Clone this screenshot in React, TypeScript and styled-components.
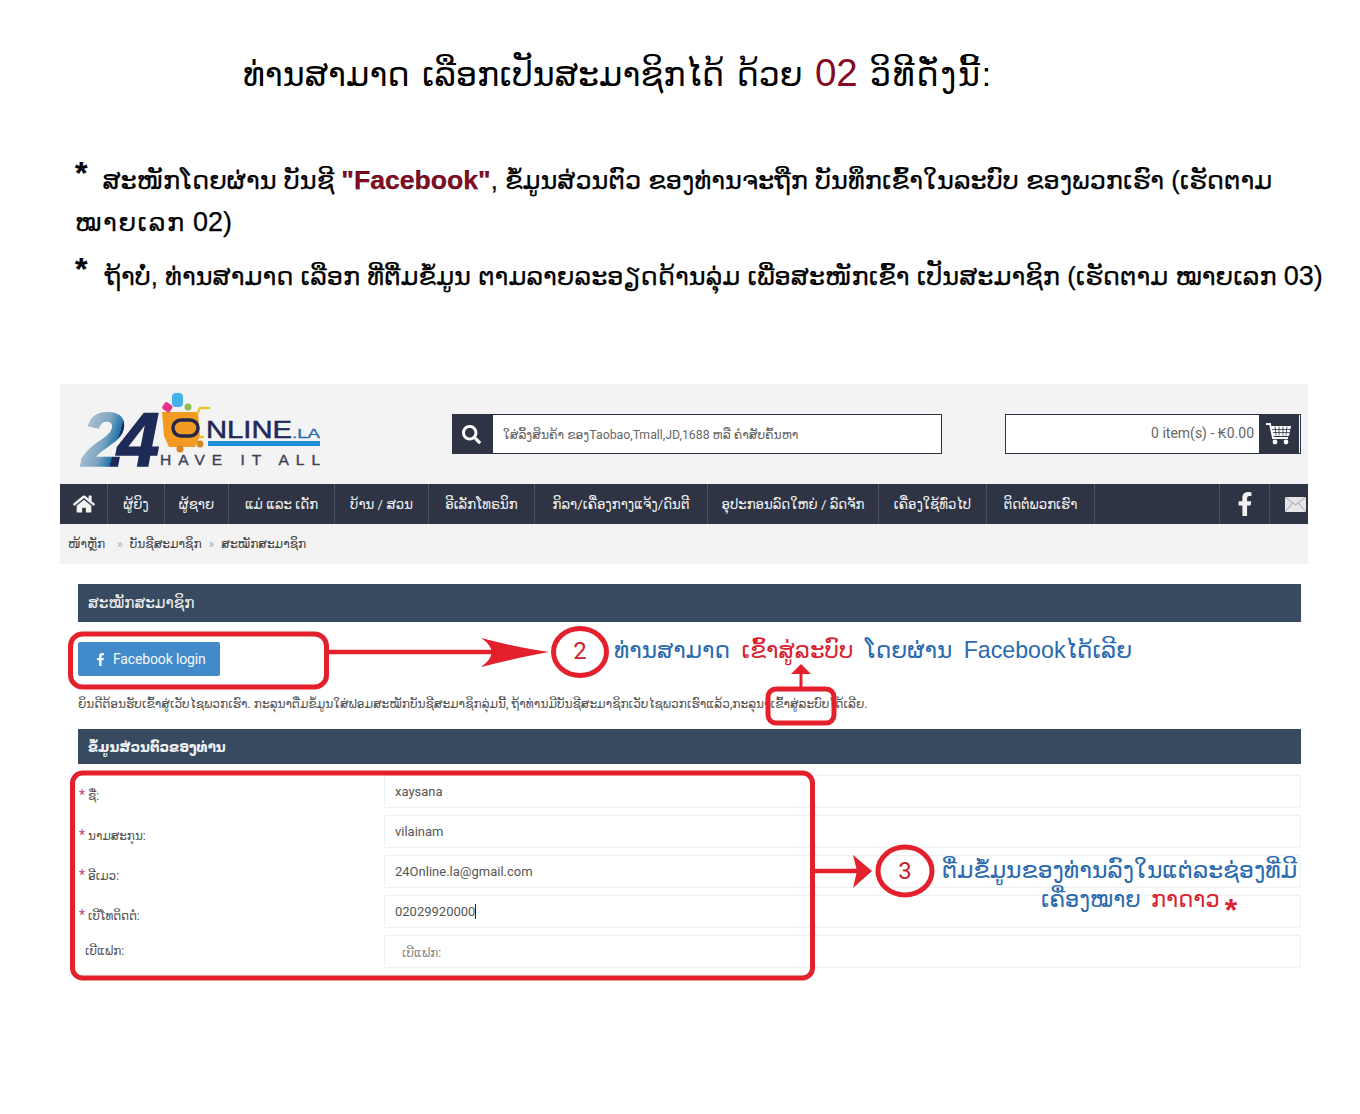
import React from "react";
import styled, { createGlobalStyle } from "styled-components";
import { FaHome, FaSearch, FaFacebookF } from "react-icons/fa";

const Global = createGlobalStyle`
  html, body { margin: 0; padding: 0; background: #fff; }
  * { box-sizing: border-box; }
`;

const LAO = `"Liberation Sans", "DejaVu Sans", sans-serif`;
const SITE = `Roboto, "DejaVu Sans", sans-serif`;

const Page = styled.div`
  position: relative;
  width: 1360px;
  height: 1114px;
  background: #fff;
  overflow: hidden;
  font-family: ${LAO};
  color: #000;
`;

const Intro = styled.section`
  height: 384px;
  padding: 51px 0 0 75px;
`;

const Title = styled.h1`
  margin: 0 0 62px 168px;
  font-size: 33.3px;
  word-spacing: 3px;
  line-height: 44px;
  font-weight: 400;
  white-space: nowrap;
`;

const Accent = styled.span<{ $bold?: boolean; $big?: number }>`
  color: #860a24;
  font-weight: ${(p) => (p.$bold ? 700 : 400)};
  font-size: ${(p) => (p.$big ? `${p.$big}px` : "inherit")};
`;

const Para = styled.p<{ $gap: number; $size: number }>`
  margin: 0 0 ${(p) => p.$gap}px;
  font-size: ${(p) => p.$size}px;
  line-height: 42px;
  white-space: nowrap;
  -webkit-text-stroke: 0.25px #000;
`;

const Latin = styled.span`
  font-size: 27px;
`;

const Spaced = styled.span<{ $by: number }>`
  letter-spacing: ${(p) => p.$by}px;
`;

const Star = styled.span<{ $right: number }>`
  display: inline-block;
  margin-right: ${(p) => p.$right}px;
  font-size: 32px;
  font-weight: 700;
  line-height: 20px;
  vertical-align: 5px;
`;

const Shop = styled.div`
  width: 1248px;
  margin-left: 60px;
  font-family: ${SITE};
`;

const Header = styled.header`
  display: flex;
  align-items: center;
  height: 100px;
  padding: 0 7px 0 10px;
  background: #f3f3f4;
`;

const LogoArt = styled.svg`
  display: block;
  flex: none;
  width: 260px;
  height: 100px;
  margin-right: 122px;
`;

const Search = styled.div`
  display: flex;
  flex: none;
  width: 490px;
  height: 40px;
  margin-right: 63px;
  border: 1px solid #2e3444;
  background: #fff;
`;

const SearchButton = styled.div`
  display: flex;
  flex: none;
  align-items: center;
  justify-content: center;
  width: 40px;
  padding-right: 3px;
  background: #2e3444;
  color: #fff;
  font-size: 19px;
`;

const SearchHint = styled.div`
  padding-left: 10px;
  font-size: 12.3px;
  line-height: 40px;
  color: #666;
  white-space: nowrap;
`;

const Cart = styled.div`
  display: flex;
  flex: none;
  justify-content: flex-end;
  width: 296px;
  height: 40px;
  padding-right: 1px;
  border: 1px solid #2e3444;
  background: #fff;
`;

const CartTotal = styled.div`
  padding-right: 5px;
  font-size: 14px;
  line-height: 36px;
  color: #666;
`;

const CartButton = styled.div`
  display: flex;
  flex: none;
  align-items: center;
  justify-content: center;
  width: 40px;
  background: #2e3444;
`;

const Nav = styled.nav`
  display: flex;
  height: 40px;
  background: #2e3444;
`;

const NavItem = styled.div<{ $w: number }>`
  display: flex;
  flex: none;
  align-items: center;
  justify-content: center;
  width: ${(p) => p.$w}px;
  border-right: 1px dotted #666c7a;
  color: #eef0f2;
  font-size: 13.3px;
  white-space: nowrap;
`;

const NavFill = styled.div`
  flex: 1;
  border-right: 1px dotted #666c7a;
`;

const NavIcon = styled.div<{ $w: number; $last?: boolean }>`
  display: flex;
  flex: none;
  align-items: center;
  justify-content: ${(p) => (p.$last ? "flex-end" : "center")};
  width: ${(p) => p.$w}px;
  padding-right: ${(p) => (p.$last ? "2px" : "0")};
  border-right: ${(p) => (p.$last ? "none" : "1px dotted #666c7a")};
  color: #f2f2f2;
  font-size: 24px;
`;

const HomeGlyph = styled(FaHome)`
  font-size: 22px;
`;

const Crumbs = styled.div`
  display: flex;
  align-items: center;
  gap: 7px;
  height: 40px;
  padding-left: 8px;
  background: #f3f3f4;
  color: #444;
  font-size: 12.2px;
  white-space: nowrap;
`;

const CrumbHome = styled.span`
  width: 42px;
`;

const CrumbSep = styled.span`
  color: #aaa;
`;

const Form = styled.div`
  padding: 20px 7px 0 18px;
`;

const SectionBar = styled.h2<{ $h: number; $bold?: boolean }>`
  display: flex;
  align-items: center;
  height: ${(p) => p.$h}px;
  margin: 0;
  padding-left: 10px;
  background: #374a5f;
  color: #eef1f4;
  font-size: ${(p) => (p.$bold ? 13.5 : 15.3)}px;
  font-weight: ${(p) => (p.$bold ? 700 : 400)};
`;

const FbButton = styled.div`
  display: inline-flex;
  align-items: center;
  gap: 6px;
  width: 142px;
  height: 34px;
  margin-top: 20px;
  padding-left: 16px;
  border-radius: 2px;
  background: #428bca;
  color: #f4f8fb;
  font-size: 14px;
  letter-spacing: -0.15px;
`;

const Note = styled.p`
  margin: 20px 0 16px;
  font-size: 12.17px;
  line-height: 17px;
  color: #555;
  white-space: nowrap;
`;

const Rows = styled.div`
  display: flex;
  flex-direction: column;
  gap: 7px;
  margin-top: 11px;
`;

const Row = styled.div`
  display: flex;
  height: 33px;
`;

const Label = styled.div<{ $plain?: boolean }>`
  flex: none;
  width: 306px;
  padding: ${(p) => (p.$plain ? "8px 0 0 7px" : "12px 0 0 1px")};
  font-size: 12px;
  line-height: 16px;
  color: #555;
  white-space: nowrap;
`;

const Req = styled.span`
  margin-right: 3px;
  color: #c2477a;
  font-size: 14px;
`;

const Field = styled.div<{ $hint?: boolean }>`
  flex: 1;
  padding: ${(p) => (p.$hint ? "9px 0 0 17px" : "0 0 0 10px")};
  border: 1px solid #eef1f3;
  font-size: ${(p) => (p.$hint ? 12 : 13)}px;
  line-height: ${(p) => (p.$hint ? "16px" : "32px")};
  color: ${(p) => (p.$hint ? "#888" : "#555")};
  border-radius: 2px;
`;

const Caret = styled.span`
  display: inline-block;
  width: 1px;
  height: 15px;
  background: #222;
  vertical-align: -3px;
`;

const Markup = styled.svg`
  position: absolute;
  top: 0;
  left: 0;
  width: 1360px;
  height: 1114px;
  pointer-events: none;
`;

const Callout = styled.div<{ $x: number; $y: number; $size: number; $spread?: number }>`
  position: absolute;
  left: ${(p) => p.$x}px;
  top: ${(p) => p.$y}px;
  font-family: ${LAO};
  font-size: ${(p) => p.$size}px;
  word-spacing: ${(p) => p.$spread ?? 0}px;
  line-height: 30px;
  color: #2a6aae;
  white-space: nowrap;
`;

const CalloutRed = styled.span`
  color: #d8232f;
`;

const CalloutStar = styled.span`
  margin-left: 5px;
  color: #d8232f;
  font-size: 32px;
  font-weight: 700;
  line-height: 20px;
  vertical-align: -14px;
`;

const CircleNumber = styled.div<{ $x: number; $y: number }>`
  position: absolute;
  left: ${(p) => p.$x - 20}px;
  top: ${(p) => p.$y - 15}px;
  width: 40px;
  font-family: ${SITE};
  font-size: 24px;
  line-height: 30px;
  color: #c8222c;
  text-align: center;
`;

const navItems: [string, number][] = [
  ["ຜູ້ຍິງ", 57],
  ["ຜູ້ຊາຍ", 64],
  ["ແມ່ ແລະ ເດັກ", 106],
  ["ບ້ານ / ສວນ", 94],
  ["ອີເລັກໂທຣນິກ", 106],
  ["ກິລາ/ເຄື່ອງກາງແຈ້ງ/ດົນຕີ", 173],
  ["ອຸປະກອນລົດໃຫຍ່ / ລົດຈັກ", 171],
  ["ເຄື່ອງໃຊ້ທົ່ວໄປ", 108],
  ["ຕິດຕໍ່ພວກເຮົາ", 108],
];

const rows: { label: string; value?: string; caret?: boolean; hint?: string }[] = [
  { label: "ຊື່:", value: "xaysana" },
  { label: "ນາມສະກຸນ:", value: "vilainam" },
  { label: "ອີເມວ:", value: "24Online.la@gmail.com" },
  { label: "ເບີໂທຕິດຕໍ່:", value: "02029920000", caret: true },
  { label: "ເບີແຟກ:", hint: "ເບີແຟກ:" },
];

const Logo = () => (
  <LogoArt viewBox="70 384 260 100">
    <defs>
      <linearGradient id="two" gradientUnits="userSpaceOnUse" x1="85" y1="415" x2="165" y2="440">
        <stop offset="0" stopColor="#b4c8d8" />
        <stop offset="0.3" stopColor="#7fa5c0" />
        <stop offset="0.46" stopColor="#1a74a6" />
        <stop offset="0.46" stopColor="#1e2a57" />
        <stop offset="1" stopColor="#1e2a57" />
      </linearGradient>
    </defs>
    <text x="82" y="466" fontFamily="Liberation Sans" fontWeight="700" fontStyle="italic" fontSize="76" letterSpacing="-7" fill="url(#two)" stroke="url(#two)" strokeWidth="1.5">24</text>
    <path d="M162 412h36l2 24-5 11h-26l-5-11z" fill="#f39a23" />
    <path d="M197 414l3-6h10M199 437h5" fill="none" stroke="#e9c52c" strokeWidth="2.5" />
    <circle cx="180" cy="449" r="3.5" fill="#d9861f" />
    <circle cx="200" cy="444" r="3.5" fill="#d9861f" />
    <rect x="163" y="403" width="9" height="8" rx="2" transform="rotate(35 167 407)" fill="#e8318c" />
    <rect x="172" y="393" width="11" height="14" rx="4" fill="#45b3ea" />
    <circle cx="188" cy="407" r="3.5" fill="#8cc04b" />
    <rect x="173" y="420" width="25" height="16" rx="8" fill="none" stroke="#23284a" strokeWidth="3.5" />
    <text x="206" y="438" fontFamily="Liberation Sans" fontSize="24" fill="#1e2a57" stroke="#1e2a57" strokeWidth="0.5" textLength="86" lengthAdjust="spacingAndGlyphs">NLINE</text>
    <text x="292" y="438" fontFamily="Liberation Sans" fontSize="13" fill="#1f6fa8" stroke="#1f6fa8" strokeWidth="0.3" textLength="28" lengthAdjust="spacingAndGlyphs">.LA</text>
    <rect x="208" y="441" width="112" height="5" fill="#1f8fd6" />
    <text x="160" y="465" fontFamily="Liberation Sans" fontSize="15.5" fill="#3b4358" stroke="#3b4358" strokeWidth="0.4" textLength="160">HAVE IT ALL</text>
  </LogoArt>
);

const BasketIcon = () => (
  <svg width="26" height="22" viewBox="0 0 26 22" aria-hidden>
    <path d="M0 1h4l3 14h15" fill="none" stroke="#fff" strokeWidth="1.8" />
    <path d="M5 3h20l-2 10H7z" fill="#fff" />
    <path d="M9 3.5l1 9M13 3.5v9M17 3.5v9M21 3.5l-1 9M6 6.5h19M7 9.5h17" stroke="#2e3444" strokeWidth="0.8" />
    <circle cx="9" cy="19" r="2.4" fill="#fff" />
    <circle cx="20" cy="19" r="2.4" fill="#fff" />
  </svg>
);

const MailIcon = () => (
  <svg width="21" height="15" viewBox="0 0 21 15" aria-hidden>
    <rect width="21" height="15" fill="#e6e6e6" />
    <path d="M0 0l10.5 8L21 0M0 15l7.5-9M21 15l-7.5-9" fill="none" stroke="#8d919b" strokeWidth="0.8" />
  </svg>
);

export default function App() {
  return (
    <Page>
      <Global />
      <Intro>
        <Title>
          ທ່ານສາມາດ ເລືອກເປັນສະມາຊິກໄດ້ ດ້ວຍ <Accent $big={38.5}>02</Accent> <Spaced $by={1.7}>ວິທີດັ່ງນີ້:</Spaced>
        </Title>
        <Para $gap={12} $size={25.65}>
          <Star $right={15}>*</Star>
          ສະໜັກໂດຍຜ່ານ ບັນຊີ <Accent $bold $big={26.6}>"Facebook"</Accent>, ຂໍ້ມູນສ່ວນຕົວ ຂອງທ່ານຈະຖືກ ບັນທຶກເຂົ້າໃນລະບົບ ຂອງພວກເຮົາ (ເຮັດຕາມ
          <br />
          <Spaced $by={1.6}>ໝາຍເລກ</Spaced> <Latin>02)</Latin>
        </Para>
        <Para $gap={0} $size={25.65}>
          <Star $right={17}>*</Star>
          ຖ້າບໍ່, ທ່ານສາມາດ ເລືອກ ທີ່ຕື່ມຂໍ້ມູນ ຕາມລາຍລະອຽດດ້ານລຸ່ມ ເພື່ອສະໜັກເຂົ້າ ເປັນສະມາຊິກ (ເຮັດຕາມ ໝາຍເລກ <Latin>03)</Latin>
        </Para>
      </Intro>

      <Shop>
        <Header>
          <Logo />
          <Search>
            <SearchButton><FaSearch /></SearchButton>
            <SearchHint>ໃສ່ລິ້ງສິນຄ້າ ຂອງTaobao,Tmall,JD,1688 ຫລື ຄໍາສັບຄົ້ນຫາ</SearchHint>
          </Search>
          <Cart>
            <CartTotal>0 item(s) - ₭0.00</CartTotal>
            <CartButton><BasketIcon /></CartButton>
          </Cart>
        </Header>
        <Nav>
          <NavIcon $w={48}><HomeGlyph /></NavIcon>
          {navItems.map(([text, w]) => (
            <NavItem key={text} $w={w}>{text}</NavItem>
          ))}
          <NavFill />
          <NavIcon $w={50}><FaFacebookF /></NavIcon>
          <NavIcon $w={38} $last><MailIcon /></NavIcon>
        </Nav>
        <Crumbs>
          <CrumbHome>ໜ້າຫຼັກ</CrumbHome>
          <CrumbSep>»</CrumbSep>
          <span>ບັນຊີສະມາຊິກ</span>
          <CrumbSep>»</CrumbSep>
          <span>ສະໝັກສະມາຊິກ</span>
        </Crumbs>
        <Form>
          <SectionBar $h={38}>ສະໝັກສະມາຊິກ</SectionBar>
          <FbButton><FaFacebookF size={13} />Facebook login</FbButton>
          <Note>ຍິນດີຕ້ອນຮັບເຂົ້າສູ່ເວັບໄຊພວກເຮົາ. ກະລຸນາຕື່ມຂໍ້ມູນໃສ່ຟອມສະໝັກບັນຊີສະມາຊິກລຸ່ມນີ້, ຖ້າທ່ານມີບັນຊີສະມາຊິກເວັບໄຊພວກເຮົາແລ້ວ,ກະລຸນາເຂົ້າສູ່ລະບົບໄດ້ເລີຍ.</Note>
          <SectionBar $h={35} $bold>ຂໍ້ມູນສ່ວນຕົວຂອງທ່ານ</SectionBar>
          <Rows>
            {rows.map((r) => (
              <Row key={r.label}>
                <Label $plain={!!r.hint}>
                  {!r.hint && <Req>*</Req>}
                  {r.label}
                </Label>
                <Field $hint={!!r.hint}>
                  {r.value ?? r.hint}
                  {r.caret && <Caret />}
                </Field>
              </Row>
            ))}
          </Rows>
        </Form>
      </Shop>

      <Markup viewBox="0 0 1360 1114" aria-hidden>
        <g fill="none" stroke="#e3202c" strokeWidth="5">
          <rect x="70.5" y="634" width="256" height="53" rx="12" />
          <rect x="768" y="689" width="66" height="34" rx="8" />
          <rect x="72.5" y="773" width="740" height="205" rx="10" />
          <ellipse cx="580" cy="652" rx="26.5" ry="23.5" />
          <ellipse cx="905" cy="871" rx="27" ry="24" />
          <path d="M326 652h170M814 871h44" strokeWidth="4.5" />
          <path d="M801 689v-20" strokeWidth="3" />
        </g>
        <path d="M481 638Q520 648 549 652Q520 657 481 667Q502 652 481 638z" fill="#e3202c" />
        <path d="M853 855l19 16-19 17 4-17z" fill="#e3202c" />
        <path d="M791 674l10-10 10 10z" fill="#e3202c" />
      </Markup>
      <CircleNumber $x={580} $y={651}>2</CircleNumber>
      <CircleNumber $x={905} $y={871}>3</CircleNumber>
      <Callout $x={614} $y={635} $size={23.2} $spread={5}>
        ທ່ານສາມາດ <CalloutRed>ເຂົ້າສູ່ລະບົບ</CalloutRed> ໂດຍຜ່ານ Facebookໄດ້ເລີຍ
      </Callout>
      <Callout $x={942} $y={855} $size={23.5}>ຕື່ມຂໍ້ມູນຂອງທ່ານລົງໃນແຕ່ລະຊ່ອງທີ່ມີ</Callout>
      <Callout $x={1041} $y={885} $size={22.5} $spread={4}>
        ເຄື່ອງໝາຍ <CalloutRed>ກາດາວ</CalloutRed>
        <CalloutStar>*</CalloutStar>
      </Callout>
    </Page>
  );
}
